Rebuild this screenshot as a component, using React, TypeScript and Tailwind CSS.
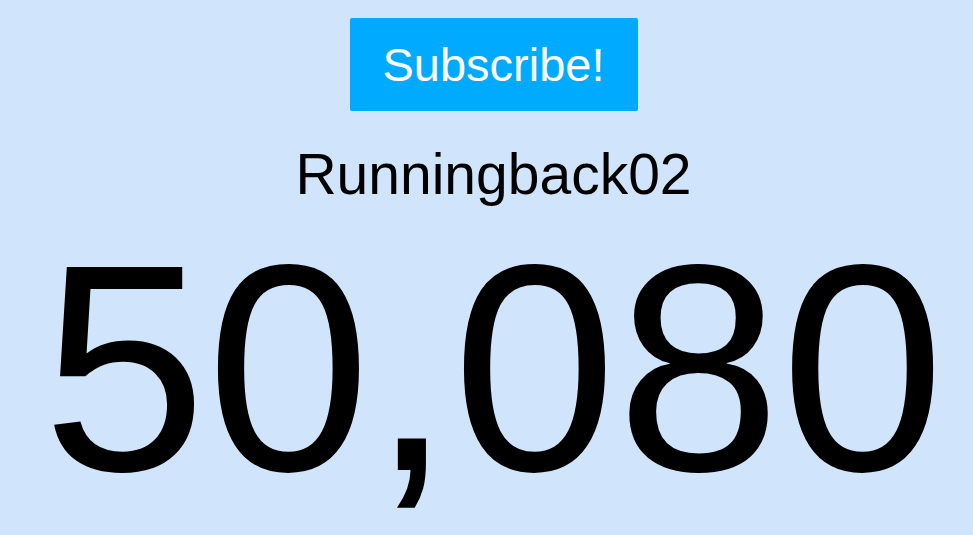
export default function App() {
    return (
        <div
            className="min-h-screen w-full bg-[#d0e4fc] flex flex-col items-center pl-[14px] text-black"
            style={{ fontFamily: '"Liberation Sans", Arial, sans-serif' }}
        >
            <button className="mt-[18px] w-[288px] h-[93px] rounded-[2px] bg-[#00aaff] text-white text-[47px] leading-none">
                Subscribe!
            </button>
            <div className="mt-[31px] text-[57px] leading-[64px]">Runningback02</div>
            <div className="mt-[15px] text-[295px] leading-none whitespace-nowrap">50,080</div>
        </div>
    );
}
